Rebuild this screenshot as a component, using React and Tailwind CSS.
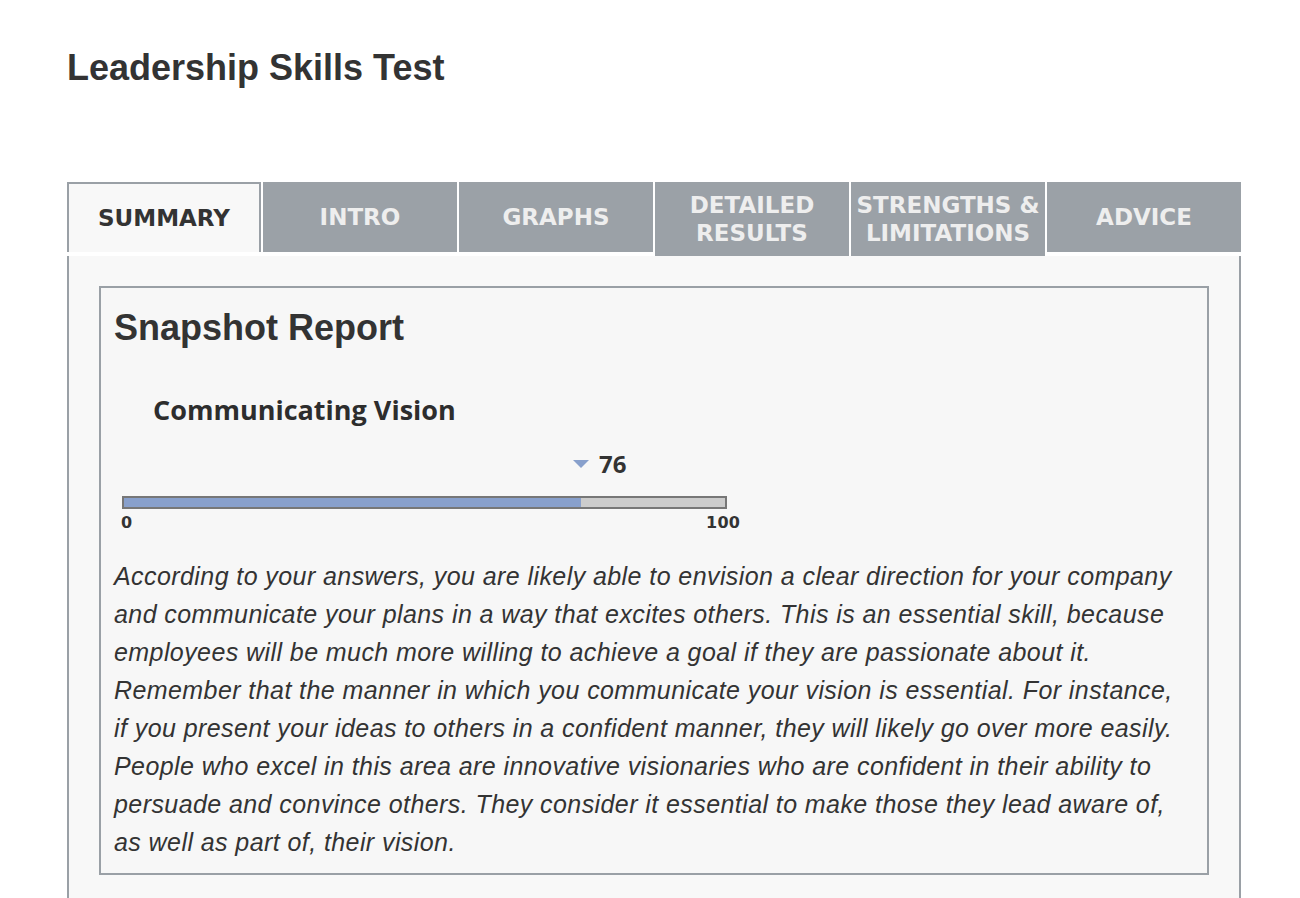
import React from 'react';

const TABS = [
  { label: 'SUMMARY', active: true },
  { label: 'INTRO' },
  { label: 'GRAPHS' },
  { label: ['DETAILED', 'RESULTS'], tall: true },
  { label: ['STRENGTHS &', 'LIMITATIONS'], tall: true },
  { label: 'ADVICE' },
];

const LINES = [
  'According to your answers, you are likely able to envision a clear direction for your company',
  'and communicate your plans in a way that excites others. This is an essential skill, because',
  'employees will be much more willing to achieve a goal if they are passionate about it.',
  'Remember that the manner in which you communicate your vision is essential. For instance,',
  'if you present your ideas to others in a confident manner, they will likely go over more easily.',
  'People who excel in this area are innovative visionaries who are confident in their ability to',
  'persuade and convince others. They consider it essential to make those they lead aware of,',
  'as well as part of, their vision.',
];

const verdana = { fontFamily: 'Verdana, "DejaVu Sans", sans-serif' };
const openSans = { fontFamily: '"Open Sans", "Liberation Sans", sans-serif' };

function Tab({ tab }) {
  const lines = Array.isArray(tab.label) ? tab.label : [tab.label];
  const base = 'w-[194px] flex flex-col items-center justify-center font-bold text-[23px] leading-[28px]';
  if (tab.active) {
    return (
      <div className={`${base} h-[70px] bg-[#f8f8f8] border-2 border-b-0 border-[#9aa0a6] text-[#333]`} style={verdana}>
        {lines.map((l) => <span key={l}>{l}</span>)}
      </div>
    );
  }
  return (
    <div className={`${base} ${tab.tall ? 'h-[74px]' : 'h-[70px]'} bg-[#9ba1a7] text-[#eeeeee]`} style={verdana}>
      {lines.map((l) => <span key={l} className="whitespace-nowrap">{l}</span>)}
    </div>
  );
}

export default function App() {
  return (
    <main className="min-h-[898px] bg-white text-[#333] pl-[67px] pr-[59px]" style={{ fontFamily: '"Liberation Sans", Arial, sans-serif' }}>
      <h1 className="pt-[47px] text-[36px] font-bold leading-[42px]">Leadership Skills Test</h1>

      <div className="mt-[93px] flex gap-[2px] h-[74px] items-start">
        {TABS.map((t, i) => <Tab key={i} tab={t} />)}
      </div>

      <div className="border-x-2 border-[#9aa0a6] bg-[#f8f8f8] pt-[30px] px-[30px] pb-[40px]">
        <div className="border-2 border-[#9aa0a6] bg-[#f7f7f7] pl-[13px] pr-[10px] pt-[20px] pb-[12px]">
          <h2 className="text-[36px] font-bold leading-[40px]">Snapshot Report</h2>

          <h3 className="mt-[46px] ml-[39px] text-[27px] font-bold leading-[32px] text-[#2d2d2d]" style={openSans}>
            Communicating Vision
          </h3>

          <div className="relative h-[129px] w-[640px] mt-[2px]">
            <div className="absolute left-[459px] top-[21px] flex items-center gap-[10px]">
              <svg width="16" height="9" viewBox="0 0 16 9"><path d="M0 0 L16 0 L8 8 Z" fill="#88a0cc" /></svg>
              <span className="text-[24px] font-bold leading-[30px]" style={openSans}>76</span>
            </div>
            <div className="absolute left-[8px] top-[68px] w-[605px] h-[13px] border-2 border-[#777] bg-[#cccccc] flex">
              <div className="h-full bg-[#88a0cc]" style={{ width: '76%' }} />
            </div>
            <span className="absolute left-[7px] top-[85px] text-[16px] font-bold leading-[20px]" style={verdana}>0</span>
            <span className="absolute left-[592px] top-[85px] text-[16px] font-bold leading-[20px] tracking-[0.3px]" style={verdana}>100</span>
          </div>

          <p className="italic text-[25px] leading-[38px] tracking-[0.42px] text-[#333]">
            {LINES.map((l, i) => <span key={i} className="block whitespace-nowrap">{l}</span>)}
          </p>
        </div>
      </div>
    </main>
  );
}
